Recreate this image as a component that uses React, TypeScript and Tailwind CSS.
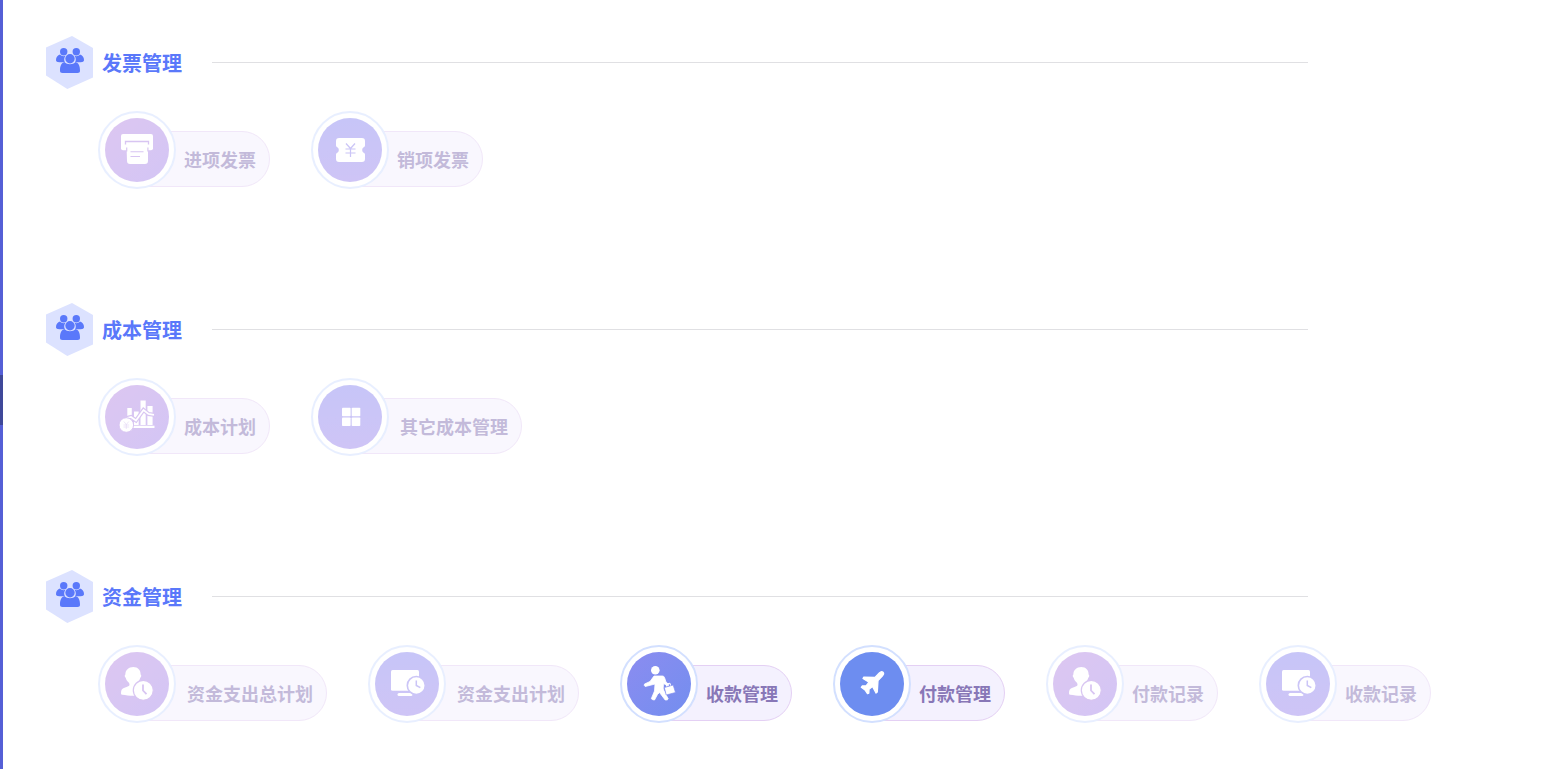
import type { ReactNode } from 'react';
import clsx from 'clsx';

type IconName = 'printer' | 'ticket' | 'chart' | 'grid' | 'userClock' | 'screenClock' | 'walk' | 'plane';

interface MenuEntry {
  label: string;
  icon: IconName;
  tone: string;
  enabled?: boolean;
}

const pink = 'bg-linear-to-br from-[#bb8fe4] to-[#a98dec] text-[#b38de6]';
const violet = 'bg-linear-to-b from-[#908df2] to-[#9f8bee] text-[#988cf0]';
const indigo = 'bg-linear-to-br from-[#8b8cf0] to-[#738eef] text-[#7f8df0]';
const blue = 'bg-[#6d8df0] text-[#6d8df0]';

const sections: { title: string; items: MenuEntry[] }[] = [
  {
    title: '发票管理',
    items: [
      { label: '进项发票', icon: 'printer', tone: pink },
      { label: '销项发票', icon: 'ticket', tone: violet },
    ],
  },
  {
    title: '成本管理',
    items: [
      { label: '成本计划', icon: 'chart', tone: pink },
      { label: '其它成本管理', icon: 'grid', tone: violet },
    ],
  },
  {
    title: '资金管理',
    items: [
      { label: '资金支出总计划', icon: 'userClock', tone: pink },
      { label: '资金支出计划', icon: 'screenClock', tone: violet },
      { label: '收款管理', icon: 'walk', tone: indigo, enabled: true },
      { label: '付款管理', icon: 'plane', tone: blue, enabled: true },
      { label: '付款记录', icon: 'userClock', tone: pink },
      { label: '收款记录', icon: 'screenClock', tone: violet },
    ],
  },
];

// currentColor is the circle's own tone, used for the cut-outs
const icons: Record<IconName, ReactNode> = {
  printer: (
    <>
      <rect x="16" y="16" width="32" height="16.3" rx="2" />
      <path d="M21.500 27h21.500v16a3 3 0 0 1-3 3H25a3 3 0 0 1-3-3z" />
      <g fill="none" stroke="currentColor">
        <path d="M20.500 26.500v-3h23v3" strokeWidth="1.300" />
        <path d="M21.700 33.500v-4M42.900 33.500v-4" strokeWidth="1.200" />
        <path d="M25.500 33.700h13M25.500 38.500H35" strokeWidth="1.100" />
      </g>
    </>
  ),
  ticket: (
    <>
      <path d="M21 20h23a3 3 0 0 1 3 3v4.500q0 1.200-1 1.600a3.200 3.200 0 0 0 0 5.800q1 .4 1 1.600V41a3 3 0 0 1-3 3H21a3 3 0 0 1-3-3v-4.500q0-1.200 1-1.600a3.200 3.200 0 0 0 0-5.800q-1-.4-1-1.600V23a3 3 0 0 1 3-3z" />
      <path d="M28 25.500l4.500 5 4.500-5M27.500 31h10M27.500 35h10M32.500 30.500v8.500" fill="none" stroke="currentColor" strokeWidth="1.200" />
    </>
  ),
  chart: (
    <>
      <path d="M22.300 23h4.500v17h-4.500zM29 26.500h4.700V40H29zM35.500 15.500h5.200V40h-5.200zM42.400 21h5.200v19h-5.200z" />
      <path d="M27 40.700h22.500V43H27z" />
      <path d="M22 33l4-1 5 3.500L38.500 25l5 4 5.500.8" fill="none" stroke="currentColor" strokeWidth="4" />
      <path d="M22 33l4-1 5 3.500L38.500 25l5 4 5.500.8" fill="none" stroke="white" strokeWidth="1.800" />
      <circle cx="21.300" cy="40" r="7.300" stroke="currentColor" strokeWidth="1" />
      <path d="M18.800 36.500l2.500 3 2.500-3M18.500 40h5.600M18.500 42h5.600M21.300 39.500v4.500" fill="none" stroke="currentColor" strokeOpacity=".6" strokeWidth=".7" />
    </>
  ),
  grid: (
    <>
      <rect x="24" y="22.700" width="8.600" height="8.600" rx=".8" />
      <rect x="33.700" y="22.700" width="8.600" height="8.600" rx=".8" />
      <rect x="24" y="32.400" width="8.600" height="8.600" rx=".8" />
      <rect x="33.700" y="32.400" width="8.600" height="8.600" rx=".8" />
    </>
  ),
  userClock: (
    <>
      <path d="M28.300 15c4.700 0 7.500 3.200 7.300 7.500.9.500.9 2.500-.3 3.300-.5 2-1.700 3.700-3.300 4.700v3L40 37v6.700H28c-4 0-7-.6-11-1-1-.2-1-1-1-1.700 0-3 1-4.200 3.500-5.200 3-1.200 5-1.500 5-3 0-1-.3-1.700-.8-2.300-1.500-1-2.500-2.700-3-4.700-1.200-.8-1.200-2.800-.3-3.300C20.200 18.200 23.600 15 28.300 15z" />
      <circle cx="38.300" cy="38.300" r="10" stroke="currentColor" strokeWidth="1.200" />
      <path d="M38 32.500V38.500l3.500 3.700" fill="none" stroke="currentColor" strokeWidth="1.800" />
    </>
  ),
  screenClock: (
    <>
      <rect x="16" y="18" width="28" height="20.700" rx="1.500" />
      <rect x="22.500" y="41" width="15" height="3" rx="1.500" />
      <circle cx="41.300" cy="33.500" r="9" stroke="currentColor" strokeWidth="1.600" />
      <path d="M41.300 28.500v5l4 2.200" fill="none" stroke="currentColor" strokeWidth="1.500" />
    </>
  ),
  walk: (
    <>
      <circle cx="28.300" cy="18.300" r="4.300" />
      <path
        d="M27 24h8.500q1.500 0 2 1.500l1.500 4.500 3 2.700-1 1.300-4.500-2.500-.3 5.500 2.500 5 2.500 5q-.5 1.300-3 1L32.500 40.500l-2 2-3 5.500q-2 0-3.200-1.300l3.200-7.700.5-7-3 .8-6.800 1.700q-1.500-1-.7-2.500l5.500-2.500z"
        stroke="white"
        strokeWidth=".8"
        strokeLinejoin="round"
      />
      <path d="M37.300 35.500l8.900-2.500 2.300 7.500-9.300 2.500z" stroke="currentColor" strokeWidth=".7" />
      <path d="M39.700 34.500l-.5-2.300 3.800-1 .6 2.300" fill="none" stroke="white" strokeWidth="1" />
    </>
  ),
  plane: (
    <path
      d="M43 20.300c1 1 .5 2.500-.7 3.700l-4.300 4.500-.7 11.500-1.300 1-3.500-6.500-3.500 2.700-.2 4-1.300.5-2.500-3.700-3.700-2.700.9-1.300 4.100-.3 2.700-3.500-6-3.700.8-1.300 11.200.3 4.300-4.500c1.200-1.200 2.700-1.700 3.700-.7z"
      stroke="white"
      strokeWidth="1.300"
      strokeLinejoin="round"
    />
  ),
};

const SectionBadge = () => (
  <svg viewBox="0 0 47 53" className="h-[53px] w-[47px] shrink-0" aria-hidden="true">
    <path d="M26 0L47 12v29.500L21.300 53 0 39.500v-28z" fill="#dce2ff" />
    <g fill="#5a78fa">
      <circle cx="17.700" cy="15.700" r="3.700" />
      <circle cx="30.300" cy="15.700" r="3.700" />
      <path d="M14 18.500c1.500 1.800 4 2 5.500 1.200-1.500 2-1.700 4.300-.7 6.200-2 .5-5.300.4-7 0-1.300-.3-1.800-1-1.800-2 0-2.600 1.700-4.900 4-5.400zM34 18.500c-1.500 1.800-4 2-5.500 1.200 1.500 2 1.700 4.300.7 6.200 2 .5 5.300.4 7 0 1.300-.3 1.800-1 1.800-2 0-2.600-1.700-4.900-4-5.400z" />
      <circle cx="24" cy="22.700" r="4.700" />
      <path d="M18.500 26c2.500 3 8.500 3 11 0 3 .7 4.500 4 4.500 8.500 0 1.800-.8 2.500-2.500 2.500h-15c-1.700 0-2.500-.7-2.500-2.500 0-4.500 1.500-7.800 4.500-8.500z" />
    </g>
  </svg>
);

const MenuButton = ({ label, icon, tone, enabled }: MenuEntry) => (
  <button
    type="button"
    disabled={!enabled}
    className={clsx('relative flex h-[78px] shrink-0 items-start pt-5 pl-[30px]', !enabled && 'opacity-50')}
  >
    <span
      className={clsx(
        'flex h-14 items-center rounded-r-[28px] border border-[#e4d0f4] bg-[#f4f1fe] pt-0.5 pr-[13px] text-lg font-bold whitespace-nowrap text-[#8877b7]',
        label.length > 4 ? 'pl-[58px]' : 'pl-[55px]',
      )}
    >
      {label}
    </span>
    <span className="absolute top-0 left-0 flex size-[78px] items-center justify-center rounded-full border-2 border-[#d3e0ff] bg-white">
      <span className={clsx('size-16 rounded-full', tone)}>
        <svg viewBox="0 0 64 64" className="size-16" fill="white" aria-hidden="true">
          {icons[icon]}
        </svg>
      </span>
    </span>
  </button>
);

const App = () => {
  return (
    <div className="flex min-h-screen bg-white font-['Noto_Sans','Noto_Sans_CJK_SC',sans-serif]">
      {/* Collapsed side menu with its grip */}
      <aside className="w-[3px] shrink-0 bg-[#555fd6] pt-[375px]">
        <div className="h-[50px] bg-[#3f4899]" />
      </aside>

      <main className="flex min-w-0 flex-1 flex-col gap-[114px] pt-9 pl-[43px]">
        {sections.map((section) => (
          <section key={section.title}>
            <div className="flex items-center pr-[254px]">
              <SectionBadge />
              <h2 className="ml-[9px] pt-0.5 text-xl leading-7 font-bold whitespace-nowrap text-[#5a78fa]">{section.title}</h2>
              <div className="ml-[30px] h-px flex-1 bg-[#e0e0e3]" />
            </div>
            <div className="mt-[22px] flex gap-[41px] pl-[52px]">
              {section.items.map((item) => (
                <MenuButton key={item.label} {...item} />
              ))}
            </div>
          </section>
        ))}
      </main>
    </div>
  );
};

export default App;
